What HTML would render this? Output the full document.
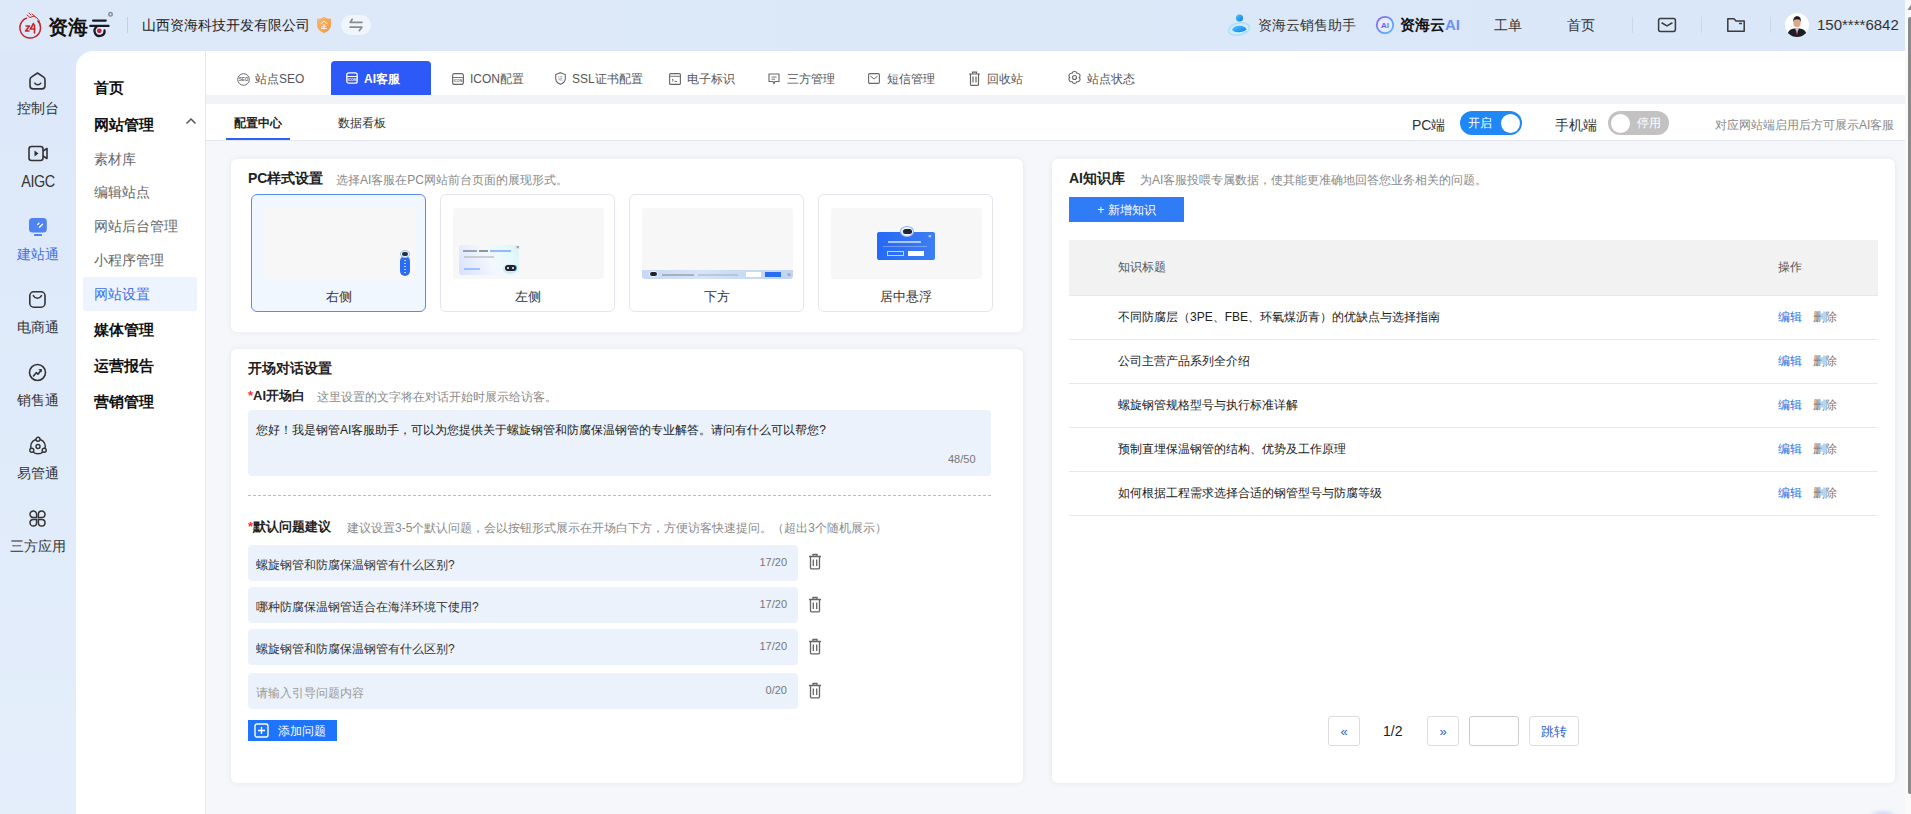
<!DOCTYPE html>
<html><head><meta charset="utf-8">
<style>
*{box-sizing:border-box;margin:0;padding:0}
html,body{width:1911px;height:814px;overflow:hidden}
body{font-family:"Liberation Sans",sans-serif;font-size:14px;color:#333;background:#f6f7fa;position:relative}
.a{position:absolute;white-space:nowrap}
#hdr{left:0;top:0;width:1905px;height:51px;background:linear-gradient(90deg,#dde9f9,#dbe8f8 60%,#d9e7f8)}
#side{left:0;top:51px;width:206px;height:763px;background:linear-gradient(180deg,#dce8f9,#e4eefb)}
#menu{left:76px;top:51px;width:129px;height:763px;background:#fff;border-top-left-radius:17px}
#vdiv{left:205px;top:51px;width:1px;height:763px;background:#e3e8f0}
.sl{width:76px;text-align:center;font-size:14px;color:#333;left:0}
.mi{left:94px;font-size:15px;font-weight:bold;color:#111}
.ms{left:94px;font-size:14px;color:#666}
#tabs{left:206px;top:51px;width:1699px;height:44px;background:#fff}
#strip{left:206px;top:95px;width:1699px;height:9px;background:#f1f3f7}
#sub{left:206px;top:104px;width:1699px;height:37px;background:#fff;border-bottom:1px solid #e4e7ed}
.tab{top:71px;font-size:12px;color:#555;height:16px;line-height:16px}
.tab svg{position:absolute;left:0;top:1px}
.card{background:#fff;border-radius:6px;box-shadow:0 0 6px rgba(20,30,60,.07)}
.gray{color:#8a8a8a;font-size:12px}
.opt{top:194px;width:175px;height:118px;border:1px solid #e3e6ee;border-radius:6px;background:#fff}
.opt .pv{position:absolute;left:12px;top:13px;width:151px;height:71px;background:#f7f7f7;border-radius:3px;overflow:hidden}
.opt .lb{position:absolute;left:0;width:100%;top:93px;text-align:center;font-size:13px;color:#333}
.inp{left:248px;width:550px;height:36px;background:#ebf2fb;border-radius:4px}
.inp .t{position:absolute;left:8px;top:12px;font-size:12px;color:#333}
.inp .c{position:absolute;right:11px;top:11px;font-size:11px;color:#777}
.trash{left:808px}
.row{left:1069px;width:809px;height:44px;border-bottom:1px solid #e8e8e8}
.row .t{position:absolute;left:49px;top:13px;font-size:12px;color:#222}
.row .e{position:absolute;left:709px;top:13px;font-size:12px;color:#2a6fe0}
.row .d{position:absolute;left:744px;top:13px;font-size:12px;color:#777}
.pg{top:716px;height:30px;border:1px solid #ddd;border-radius:3px;background:#fff;text-align:center;line-height:29px;font-size:13px;color:#2a5fd0}
</style></head><body>

<!-- HEADER -->
<div id="hdr" class="a"></div>
<svg class="a" style="left:18px;top:11px" width="26" height="28" viewBox="0 0 26 28"><path d="M19.5 9.5 A10.3 10.3 0 1 1 9 7" fill="none" stroke="#c0262b" stroke-width="1.5"/><path d="M9 4 L12 6.5 L16 5 L19 7 L21 9.5 L22 13 M14 3 L17 5.5 M11 2 L13 4" fill="none" stroke="#c0262b" stroke-width="1" stroke-linecap="round"/><path d="M7.5 15 H11.5 L7.5 20 H11.5" fill="none" stroke="#c0262b" stroke-width="1.6" stroke-linejoin="round"/><path d="M15.5 12.5 L12.5 18 H17 M16.5 14 V22" fill="none" stroke="#c0262b" stroke-width="1.6" stroke-linecap="round"/></svg>
<div class="a" style="left:48px;top:14px;font-size:20px;font-weight:bold;color:#111">资海</div>
<svg class="a" style="left:88px;top:16px" width="22" height="24" viewBox="0 0 22 24"><path d="M5 4.6 H17.8" stroke="#151a28" stroke-width="2.1" stroke-linecap="round"/><path d="M2.2 9.9 H20.6" stroke="#151a28" stroke-width="2.1" stroke-linecap="round"/><path d="M8.6 10.9 A5 5 0 1 0 16.5 14.3" fill="none" stroke="#151a28" stroke-width="2.3" stroke-linecap="round"/><circle cx="11.3" cy="14.8" r="2.4" fill="#c8232b"/></svg>
<svg class="a" style="left:107px;top:11px" width="7" height="7" viewBox="0 0 7 7"><circle cx="3.5" cy="3.3" r="2.5" fill="#8a8f99"/><circle cx="3.5" cy="3.3" r="1" fill="#dfe8f5"/></svg>
<div class="a" style="left:127px;top:17px;width:1px;height:16px;background:#c9cfd9"></div>
<div class="a" style="left:142px;top:17px;font-size:14px;color:#222">山西资海科技开发有限公司</div>
<svg class="a" style="left:316px;top:16px" width="16" height="18" viewBox="0 0 16 18"><defs><linearGradient id="og" x1="0" y1="0" x2="1" y2="1"><stop offset="0" stop-color="#f8b978"/><stop offset="1" stop-color="#f0963a"/></linearGradient></defs><path d="M8 1 C10 2.3 12.5 2.8 15 2.8 V9 C15 13 11.5 15.8 8 17 C4.5 15.8 1 13 1 9 V2.8 C3.5 2.8 6 2.3 8 1 Z" fill="url(#og)"/><path d="M4.5 8 L8 5.2 L11.5 8" fill="none" stroke="#fff" stroke-width="1" opacity=".9"/><path d="M5 12.6 H11 M8 8 V12.6 M8 10.2 H10.3 M6 10 V12.6" fill="none" stroke="#fff" stroke-width="1" opacity=".85"/></svg>
<div class="a" style="left:341px;top:15px;width:30px;height:20px;border-radius:10px;background:#eff5fd"></div>
<svg class="a" style="left:348px;top:17px" width="16" height="16" viewBox="0 0 16 16"><path d="M4.2 2.3 L2.2 5.4 H13.9" fill="none" stroke="#8c8c8c" stroke-width="1.7" stroke-linecap="round" stroke-linejoin="round"/><path d="M2.2 10.2 H13.9 L11.4 13.6" fill="none" stroke="#8c8c8c" stroke-width="1.7" stroke-linecap="round" stroke-linejoin="round"/></svg>

<svg class="a" style="left:1227px;top:13px" width="26" height="26" viewBox="0 0 26 26"><defs><linearGradient id="sg" x1="0" y1="0" x2="1" y2="1"><stop offset="0" stop-color="#3fd0ff"/><stop offset="1" stop-color="#1f6fe8"/></linearGradient></defs><ellipse cx="12" cy="16" rx="10.5" ry="6" transform="rotate(-12 12 16)" fill="none" stroke="#9fe0fb" stroke-width="1.6" opacity=".85"/><circle cx="12.5" cy="5" r="3.6" fill="url(#sg)"/><path d="M5 18 C5.5 11 19.5 11 20 18 C16 20.5 9 20.5 5 18Z" fill="url(#sg)"/><path d="M3.5 17 C8 21 17 21 21.5 15.5" fill="none" stroke="#c9f1ff" stroke-width="1.2"/></svg>
<div class="a" style="left:1258px;top:17px;font-size:14px;color:#333">资海云销售助手</div>
<svg class="a" style="left:1374px;top:14px" width="22" height="22" viewBox="0 0 22 22"><defs><linearGradient id="ag" x1="0" y1="0" x2="1" y2="1"><stop offset="0" stop-color="#8a5cf6"/><stop offset="1" stop-color="#4fc3f7"/></linearGradient><linearGradient id="at" x1="0" y1="0" x2="1" y2="0"><stop offset="0" stop-color="#6a4ff0"/><stop offset="1" stop-color="#4a8cf5"/></linearGradient></defs><circle cx="11" cy="11" r="9.6" fill="#c9d3fb" opacity=".6"/><circle cx="11" cy="11" r="8.2" fill="#e6ebff" stroke="url(#ag)" stroke-width="1.8"/><text x="11" y="14" font-size="8" font-weight="bold" fill="url(#at)" text-anchor="middle" font-family="Liberation Sans">AI</text></svg>
<div class="a" style="left:1400px;top:16px;font-size:15px;font-weight:bold;color:#111">资海云<span style="color:#6b8ef8">AI</span></div>
<div class="a" style="left:1494px;top:17px;font-size:14px;color:#333">工单</div>
<div class="a" style="left:1567px;top:17px;font-size:14px;color:#333">首页</div>
<div class="a" style="left:1632px;top:17px;width:1px;height:16px;background:#cdd6e4"></div>
<svg class="a" style="left:1657px;top:17px" width="20" height="16" viewBox="0 0 20 16"><rect x="1.6" y="1.6" width="16.8" height="12.8" rx="1.8" fill="none" stroke="#3a3a3a" stroke-width="1.5"/><path d="M5 6 L10 8.8 L15 6" fill="none" stroke="#3a3a3a" stroke-width="1.5" stroke-linecap="round" stroke-linejoin="round"/></svg>
<div class="a" style="left:1701px;top:17px;width:1px;height:16px;background:#cdd6e4"></div>
<svg class="a" style="left:1726px;top:17px" width="20" height="16" viewBox="0 0 20 16"><path d="M1.8 1.8 H8 L10 4 H18.2 V14.2 H1.8 Z" fill="none" stroke="#3a3a3a" stroke-width="1.5" stroke-linejoin="round"/><path d="M13 6.5 H16" stroke="#3a3a3a" stroke-width="1.5"/></svg>
<div class="a" style="left:1770px;top:17px;width:1px;height:16px;background:#cdd6e4"></div>
<svg class="a" style="left:1785px;top:13px" width="24" height="24" viewBox="0 0 24 24"><defs><clipPath id="av"><circle cx="12" cy="12" r="12"/></clipPath></defs><circle cx="12" cy="12" r="12" fill="#fff"/><g clip-path="url(#av)"><path d="M2 25 C2 17 6 15.5 12 15.5 C18 15.5 22 17 22 25 Z" fill="#1b1d24"/><path d="M10.3 15.5 L12 21 L13.7 15.5 Z" fill="#f2f2f2"/><path d="M11.6 16.5 L12.4 16.5 L12.6 22 L11.4 22 Z" fill="#b0212a"/><ellipse cx="12" cy="10" rx="3.6" ry="4.4" fill="#d9a98a"/><path d="M8.3 9 C8 4.5 10 3.2 12.2 3.2 C14.5 3.2 16.2 4.6 15.8 9 C15.2 7 14.5 6.3 12 6.3 C9.5 6.3 8.9 7 8.3 9Z" fill="#1e1a18"/></g></svg>
<div class="a" style="left:1817px;top:16px;font-size:15px;color:#333;letter-spacing:0px">150****6842</div>

<!-- SIDEBAR -->
<div id="side" class="a"></div>
<div id="menu" class="a"></div>
<div id="vdiv" class="a"></div>

<svg class="a" style="left:28px;top:71px" width="19" height="20" viewBox="0 0 19 20"><path d="M9.5 2 L15.3 5.9 Q17 7 17 9 V14.7 Q17 17.9 13.8 17.9 H5.2 Q2 17.9 2 14.7 V9 Q2 7 3.7 5.9 Z" fill="none" stroke="#333" stroke-width="1.6" stroke-linejoin="round"/><path d="M6.8 12.2 C8.2 14.3 11.4 14.3 12.8 12.2" fill="none" stroke="#333" stroke-width="1.5" stroke-linecap="round"/></svg>
<div class="a sl" style="top:100px">控制台</div>
<svg class="a" style="left:28px;top:145px" width="20" height="17" viewBox="0 0 20 17"><rect x="1" y="1.5" width="14" height="14" rx="2.5" fill="none" stroke="#333" stroke-width="1.6"/><path d="M15 6 L19 3.5 V13.5 L15 11" fill="none" stroke="#333" stroke-width="1.6" stroke-linejoin="round"/><path d="M6.5 5.5 L10.5 8.5 L6.5 11.5 Z" fill="#333"/></svg>
<div class="a sl" style="top:173px;font-size:16px;letter-spacing:-0.5px;transform:scaleX(0.9)">AIGC</div>
<svg class="a" style="left:28px;top:217px" width="20" height="20" viewBox="0 0 20 20"><rect x="1" y="1" width="17.8" height="14.6" rx="3.5" fill="#5082f4"/><rect x="6" y="17" width="8" height="2" rx="0.5" fill="#5082f4"/><path d="M9.6 7.6 L11 6.2 M11.5 10.2 L14.5 7.2" stroke="#fff" stroke-width="1.3" stroke-linecap="round"/></svg>
<div class="a sl" style="top:246px;color:#3f6fe8">建站通</div>
<svg class="a" style="left:28px;top:290px" width="19" height="19" viewBox="0 0 19 19"><rect x="1.8" y="1.8" width="15.2" height="15.4" rx="4" fill="none" stroke="#333" stroke-width="1.6"/><path d="M5.3 5.6 C7.2 9 11.6 9 13.5 5.6" fill="none" stroke="#333" stroke-width="1.5" stroke-linecap="round"/></svg>
<div class="a sl" style="top:319px">电商通</div>
<svg class="a" style="left:28px;top:363px" width="19" height="19" viewBox="0 0 19 19"><circle cx="9.5" cy="9.5" r="8" fill="none" stroke="#333" stroke-width="1.6"/><path d="M5.5 13 L8.3 9.7 L10 11.2 L13 7.2" fill="none" stroke="#333" stroke-width="1.6" stroke-linejoin="round" stroke-linecap="round"/><path d="M10.3 6.3 L13.8 6 L13.6 9.5 Z" fill="#333"/></svg>
<div class="a sl" style="top:392px">销售通</div>
<svg class="a" style="left:28px;top:436px" width="20" height="20" viewBox="0 0 20 20"><circle cx="10" cy="10.5" r="7.3" fill="none" stroke="#333" stroke-width="1.5"/><circle cx="10" cy="10.5" r="2" fill="none" stroke="#333" stroke-width="1.4"/><circle cx="10" cy="3.3" r="2" fill="#dfeafa" stroke="#333" stroke-width="1.4"/><circle cx="3.8" cy="14.3" r="2" fill="#dfeafa" stroke="#333" stroke-width="1.4"/><circle cx="16.2" cy="14.3" r="2" fill="#dfeafa" stroke="#333" stroke-width="1.4"/></svg>
<div class="a sl" style="top:465px">易管通</div>
<svg class="a" style="left:29px;top:510px" width="17" height="17" viewBox="0 0 17 17"><g fill="none" stroke="#333" stroke-width="1.5" stroke-linejoin="miter"><path d="M7.6 7.6 H4.3 A3.3 3.3 0 1 1 7.6 4.3 Z"/><path d="M9.4 7.6 V4.3 A3.3 3.3 0 1 1 12.7 7.6 Z"/><path d="M9.4 9.4 H12.7 A3.3 3.3 0 1 1 9.4 12.7 Z"/><path d="M7.6 9.4 V12.7 A3.3 3.3 0 1 1 4.3 9.4 Z"/></g></svg>
<div class="a sl" style="top:538px">三方应用</div>

<!-- MENU -->
<div class="a mi" style="top:79px">首页</div>
<div class="a mi" style="top:116px">网站管理</div>
<svg class="a" style="left:185px;top:117px" width="12" height="8" viewBox="0 0 12 8"><path d="M1.5 6.5 L6 2 L10.5 6.5" fill="none" stroke="#555" stroke-width="1.5"/></svg>
<div class="a ms" style="top:151px">素材库</div>
<div class="a ms" style="top:184px">编辑站点</div>
<div class="a ms" style="top:218px">网站后台管理</div>
<div class="a ms" style="top:252px">小程序管理</div>
<div class="a" style="left:83px;top:277px;width:114px;height:34px;background:#eef4fd;border-radius:2px"></div>
<div class="a ms" style="top:286px;color:#3f6fe8">网站设置</div>
<div class="a mi" style="top:321px">媒体管理</div>
<div class="a mi" style="top:357px">运营报告</div>
<div class="a mi" style="top:393px">营销管理</div>

<!-- TABS -->
<div id="tabs" class="a"></div>
<div id="strip" class="a"></div>
<div class="a" style="left:331px;top:61px;width:100px;height:34px;background:#2c59f8;border-radius:4px 4px 0 0"></div>

<svg class="a" style="left:237px;top:73px" width="13" height="13" viewBox="0 0 13 13"><circle cx="6.5" cy="6.5" r="5.8" fill="none" stroke="#666" stroke-width="1"/><text x="6.5" y="8.3" font-size="4.6" fill="#666" text-anchor="middle" font-family="Liberation Sans" font-weight="bold">SEO</text></svg>
<div class="a tab" style="left:255px">站点SEO</div>
<svg class="a" style="left:346px;top:72px" width="12" height="12" viewBox="0 0 12 12"><rect x="0.8" y="0.8" width="10.4" height="10.4" rx="2" fill="none" stroke="#fff" stroke-width="1.3"/><path d="M0.8 4.5 H11.2" stroke="#fff" stroke-width="1"/><text x="6" y="8.8" font-size="3.6" fill="#fff" text-anchor="middle" font-family="Liberation Sans" font-weight="bold">ICON</text></svg>
<div class="a tab" style="left:364px;color:#fff;font-weight:600">AI客服</div>
<svg class="a" style="left:452px;top:73px" width="12" height="12" viewBox="0 0 12 12"><rect x="0.6" y="0.6" width="10.8" height="10.8" rx="2" fill="none" stroke="#666" stroke-width="1.1"/><path d="M0.8 4.5 H11.2" stroke="#666" stroke-width="0.9"/><text x="6" y="8.8" font-size="3.6" fill="#666" text-anchor="middle" font-family="Liberation Sans" font-weight="bold">ICON</text></svg>
<div class="a tab" style="left:470px">ICON配置</div>
<svg class="a" style="left:555px;top:72px" width="11" height="13" viewBox="0 0 11 13"><path d="M5.5 0.7 L10.3 2.6 V6.5 C10.3 9.5 8 11.3 5.5 12.3 C3 11.3 0.7 9.5 0.7 6.5 V2.6 Z" fill="none" stroke="#666" stroke-width="1.1"/><text x="5.5" y="8" font-size="4.5" fill="#666" text-anchor="middle" font-family="Liberation Sans">证</text></svg>
<div class="a tab" style="left:572px">SSL证书配置</div>
<svg class="a" style="left:669px;top:73px" width="12" height="12" viewBox="0 0 12 12"><rect x="0.6" y="0.6" width="10.8" height="10.8" rx="1" fill="none" stroke="#666" stroke-width="1.1"/><path d="M0.8 3.3 H11.2 M3 6 L4.5 7.2 L3 8.4 M5.5 8.5 H8" stroke="#666" stroke-width="0.9" fill="none"/></svg>
<div class="a tab" style="left:687px">电子标识</div>
<svg class="a" style="left:768px;top:73px" width="12" height="12" viewBox="0 0 12 12"><path d="M1 1 H11 V8.5 H7 L6 10.8 L5 8.5 H1 Z" fill="none" stroke="#666" stroke-width="1.1" stroke-linejoin="round"/><path d="M3.5 4 H8.5 M3.5 6.2 H7" stroke="#666" stroke-width="0.9"/></svg>
<div class="a tab" style="left:787px">三方管理</div>
<svg class="a" style="left:868px;top:73px" width="12" height="11" viewBox="0 0 12 11"><rect x="0.6" y="0.6" width="10.8" height="9.8" rx="1.2" fill="none" stroke="#666" stroke-width="1.1"/><path d="M2.5 3.2 L6 6 L9.5 3.2" stroke="#666" stroke-width="1" fill="none"/></svg>
<div class="a tab" style="left:887px">短信管理</div>
<svg class="a" style="left:968px;top:71px" width="13" height="15" viewBox="0 0 13 15"><path d="M1 3 H12 M4.5 3 V1.2 H8.5 V3 M2.5 3 V13.5 C2.5 14 2.8 14.3 3.3 14.3 H9.7 C10.2 14.3 10.5 14 10.5 13.5 V3 M5 5.5 V11.5 M8 5.5 V11.5" fill="none" stroke="#666" stroke-width="1.2"/></svg>
<div class="a tab" style="left:987px">回收站</div>
<svg class="a" style="left:1068px;top:71px" width="13" height="13" viewBox="0 0 13 13"><path d="M8.90 2.34 A2.5 2.5 0 0 1 11.30 6.50 A2.5 2.5 0 0 1 8.90 10.66 A2.5 2.5 0 0 1 4.10 10.66 A2.5 2.5 0 0 1 1.70 6.50 A2.5 2.5 0 0 1 4.10 2.34 A2.5 2.5 0 0 1 8.90 2.34 Z" fill="none" stroke="#666" stroke-width="1.1" stroke-linejoin="round"/><circle cx="6.5" cy="6.5" r="2" fill="none" stroke="#666" stroke-width="1.1"/></svg>
<div class="a tab" style="left:1087px">站点状态</div>


<div id="sub" class="a"></div>
<div class="a" style="left:234px;top:115px;font-size:12px;font-weight:bold;color:#222">配置中心</div>
<div class="a" style="left:226px;top:138px;width:64px;height:2px;background:#2c5ff6"></div>
<div class="a" style="left:338px;top:115px;font-size:12px;color:#333">数据看板</div>

<div class="a" style="left:1412px;top:117px;font-size:14px;color:#333">PC端</div>
<div class="a" style="left:1460px;top:111px;width:62px;height:24px;border-radius:12px;background:#1f87f6"><span style="position:absolute;left:8px;top:3.5px;font-size:12px;color:#fff">开启</span><span style="position:absolute;right:2px;top:2.5px;width:19px;height:19px;border-radius:50%;background:#fff"></span></div>
<div class="a" style="left:1555px;top:117px;font-size:14px;color:#333">手机端</div>
<div class="a" style="left:1608px;top:111px;width:61px;height:24px;border-radius:12px;background:#c2c2c2"><span style="position:absolute;left:2.5px;top:2.5px;width:19px;height:19px;border-radius:50%;background:#fff"></span><span style="position:absolute;right:8px;top:3.5px;font-size:12px;color:#fff">停用</span></div>
<div class="a" style="left:1715px;top:117px;font-size:12px;color:#888">对应网站端启用后方可展示AI客服</div>

<!-- LEFT CARD 1 -->
<div class="a card" style="left:231px;top:159px;width:792px;height:173px"></div>
<div class="a" style="left:248px;top:170px;font-size:14px;font-weight:bold;color:#222">PC样式设置</div>
<div class="a gray" style="left:336px;top:172px">选择AI客服在PC网站前台页面的展现形式。</div>
<div class="a opt" style="left:251px;border-color:#5b8af5;background:#f0f7ff"><div class="pv"><div style="position:absolute;left:136px;top:41.5px;width:10px;height:27px;">
<div style="position:absolute;left:0;top:6px;width:10px;height:20px;border-radius:5px;background:#2a6cf5"></div>
<div style="position:absolute;left:4px;top:10px;width:2px;height:13px;background:repeating-linear-gradient(180deg,#fff 0 1.5px,transparent 1.5px 3px);opacity:.7"></div>
<div style="position:absolute;left:0;top:0;width:10px;height:8px;border-radius:50%;background:#e9f3ff;border:1px solid #9cc4f7"></div>
<div style="position:absolute;left:2px;top:2.5px;width:6px;height:3.5px;border-radius:2px;background:#2a2f3a"></div>
</div></div><div class="lb">右侧</div></div>
<div class="a opt" style="left:440px"><div class="pv"><div style="position:absolute;left:6px;top:37px;width:60px;height:30px;border-radius:3px;background:linear-gradient(60deg,#d6e1fb 0%,#f4f7ff 50%,#e8f9fb 75%,#d8f3f6 100%)">
<div style="position:absolute;left:4px;top:5px;width:14px;height:2px;background:#555;opacity:.5"></div>
<div style="position:absolute;left:20px;top:5px;width:9px;height:2px;background:#444;opacity:.55"></div>
<div style="position:absolute;left:31px;top:5px;width:21px;height:2px;background:#6fa0f7;opacity:.7"></div>
<div style="position:absolute;left:5px;top:11px;width:30px;height:1.5px;background:#aaa;opacity:.5"></div>
<div style="position:absolute;left:5px;top:23px;width:16px;height:2px;background:#7fb0f7;opacity:.7"></div>
<div style="position:absolute;left:44px;top:19px;width:14px;height:10px;border-radius:50%;background:rgba(200,225,235,.7)"></div>
<div style="position:absolute;left:46px;top:20px;width:11px;height:6px;border-radius:3px;background:#1f2430;box-shadow:1px 0 0 #3aa0f0"></div>
<div style="position:absolute;left:48px;top:22px;width:2px;height:2px;border-radius:50%;background:#fff"></div>
<div style="position:absolute;left:53px;top:22px;width:2px;height:2px;border-radius:50%;background:#fff"></div>
<div style="position:absolute;left:57px;top:-1px;font-size:6px;color:#666;line-height:6px">×</div>
</div></div><div class="lb">左侧</div></div>
<div class="a opt" style="left:629px"><div class="pv"><div style="position:absolute;left:0;top:62px;width:151px;height:10px;border-radius:0 0 3px 3px;background:linear-gradient(90deg,#c6d8f4,#d5e4f7 40%,#c9def5 60%,#c2d4f2)">
<div style="position:absolute;left:7px;top:1px;width:9px;height:6px;border-radius:50%;background:#f0f4fa"></div>
<div style="position:absolute;left:8px;top:2px;width:7px;height:3.5px;border-radius:2px;background:#1f2430"></div>
<div style="position:absolute;left:20px;top:4px;width:32px;height:2px;background:#777;opacity:.45"></div>
<div style="position:absolute;left:56px;top:4px;width:40px;height:1.5px;background:#999;opacity:.35"></div>
<div style="position:absolute;left:104px;top:2px;width:15px;height:5px;background:#fff"></div>
<div style="position:absolute;left:123px;top:2px;width:16px;height:5px;background:#2a6cf5"></div>
<div style="position:absolute;left:145px;top:0px;font-size:7px;color:#888;line-height:9px">×</div>
</div></div><div class="lb">下方</div></div>
<div class="a opt" style="left:818px"><div class="pv"><div style="position:absolute;left:46px;top:24px;width:58px;height:28px;border-radius:2px;background:linear-gradient(90deg,#2469f7,#3e7ef2)">
<div style="position:absolute;left:11px;top:9px;width:33px;height:2px;background:#fff;opacity:.6"></div>
<div style="position:absolute;left:6px;top:13.5px;width:44px;height:1.2px;background:#fff;opacity:.3"></div>
<div style="position:absolute;left:10px;top:19px;width:17px;height:5px;border:1px solid rgba(255,255,255,.7)"></div>
<div style="position:absolute;left:31px;top:19px;width:16px;height:5px;background:#fff"></div>
<div style="position:absolute;left:51px;top:1px;font-size:6px;color:#fff;line-height:6px">×</div>
</div>
<div style="position:absolute;left:69px;top:18px;width:14px;height:11px;border-radius:50%;background:#eef3fb;border:1px solid #8ab0f5"></div>
<div style="position:absolute;left:71.5px;top:21px;width:9px;height:5px;border-radius:2.5px;background:#1f2430"></div>
</div><div class="lb">居中悬浮</div></div>

<!-- LEFT CARD 2 -->
<div class="a card" style="left:231px;top:349px;width:792px;height:434px"></div>
<div class="a" style="left:248px;top:360px;font-size:14px;font-weight:bold;color:#222">开场对话设置</div>
<div class="a" style="left:248px;top:387px;font-size:13px;font-weight:bold;color:#222"><span style="color:#e33">*</span>AI开场白</div>
<div class="a gray" style="left:317px;top:389px">这里设置的文字将在对话开始时展示给访客。</div>
<div class="a" style="left:248px;top:410px;width:743px;height:66px;background:#ebf2fb;border-radius:4px"></div>
<div class="a" style="left:256px;top:422px;font-size:12px;color:#222">您好！我是钢管AI客服助手，可以为您提供关于螺旋钢管和防腐保温钢管的专业解答。请问有什么可以帮您?</div>
<div class="a" style="left:948px;top:453px;font-size:11px;color:#777">48/50</div>
<div class="a" style="left:248px;top:495px;width:743px;height:0;border-top:1px dashed #bbb"></div>
<div class="a" style="left:248px;top:518px;font-size:13px;font-weight:bold;color:#222"><span style="color:#e33">*</span>默认问题建议</div>
<div class="a gray" style="left:347px;top:520px">建议设置3-5个默认问题，会以按钮形式展示在开场白下方，方便访客快速提问。（超出3个随机展示）</div>

<div class="a inp" style="top:545px"><span class="t">螺旋钢管和防腐保温钢管有什么区别?</span><span class="c">17/20</span></div>
<div class="a inp" style="top:587px"><span class="t">哪种防腐保温钢管适合在海洋环境下使用?</span><span class="c">17/20</span></div>
<div class="a inp" style="top:629px"><span class="t">螺旋钢管和防腐保温钢管有什么区别?</span><span class="c">17/20</span></div>
<div class="a inp" style="top:673px"><span class="t" style="color:#999">请输入引导问题内容</span><span class="c">0/20</span></div>
<svg class="a" style="left:808px;top:553px" width="14" height="17" viewBox="0 0 14 17"><path d="M1 3.5 H13 M5 3.5 V1.5 H9 V3.5 M2.5 3.5 V15 C2.5 15.5 2.9 15.8 3.4 15.8 H10.6 C11.1 15.8 11.5 15.5 11.5 15 V3.5 M5.3 6.5 V13 M8.7 6.5 V13" fill="none" stroke="#666" stroke-width="1.3"/></svg>
<svg class="a" style="left:808px;top:596px" width="14" height="17" viewBox="0 0 14 17"><path d="M1 3.5 H13 M5 3.5 V1.5 H9 V3.5 M2.5 3.5 V15 C2.5 15.5 2.9 15.8 3.4 15.8 H10.6 C11.1 15.8 11.5 15.5 11.5 15 V3.5 M5.3 6.5 V13 M8.7 6.5 V13" fill="none" stroke="#666" stroke-width="1.3"/></svg>
<svg class="a" style="left:808px;top:638px" width="14" height="17" viewBox="0 0 14 17"><path d="M1 3.5 H13 M5 3.5 V1.5 H9 V3.5 M2.5 3.5 V15 C2.5 15.5 2.9 15.8 3.4 15.8 H10.6 C11.1 15.8 11.5 15.5 11.5 15 V3.5 M5.3 6.5 V13 M8.7 6.5 V13" fill="none" stroke="#666" stroke-width="1.3"/></svg>
<svg class="a" style="left:808px;top:682px" width="14" height="17" viewBox="0 0 14 17"><path d="M1 3.5 H13 M5 3.5 V1.5 H9 V3.5 M2.5 3.5 V15 C2.5 15.5 2.9 15.8 3.4 15.8 H10.6 C11.1 15.8 11.5 15.5 11.5 15 V3.5 M5.3 6.5 V13 M8.7 6.5 V13" fill="none" stroke="#666" stroke-width="1.3"/></svg>

<div class="a" style="left:248px;top:720px;width:89px;height:21px;background:#1f74fd"></div>
<svg class="a" style="left:254px;top:723px" width="15" height="15" viewBox="0 0 15 15"><rect x="1" y="1" width="13" height="13" rx="2" fill="none" stroke="#fff" stroke-width="1.4"/><path d="M7.5 4 V11 M4 7.5 H11" stroke="#fff" stroke-width="1.4"/></svg>
<div class="a" style="left:278px;top:723px;font-size:12px;color:#fff">添加问题</div>

<!-- RIGHT CARD -->
<div class="a card" style="left:1052px;top:159px;width:843px;height:624px"></div>
<div class="a" style="left:1069px;top:170px;font-size:14px;font-weight:bold;color:#222">AI知识库</div>
<div class="a gray" style="left:1140px;top:172px">为AI客服投喂专属数据，使其能更准确地回答您业务相关的问题。</div>
<div class="a" style="left:1069px;top:197px;width:115px;height:25px;background:#2f7cf6;color:#fff;font-size:12px;text-align:center;line-height:27px">+ 新增知识</div>
<div class="a" style="left:1069px;top:240px;width:809px;height:56px;background:#f2f2f2;border-bottom:1px solid #e8e8e8"></div>
<div class="a" style="left:1118px;top:259px;font-size:12px;color:#555">知识标题</div>
<div class="a" style="left:1778px;top:259px;font-size:12px;color:#555">操作</div>
<div class="a row" style="top:296px"><span class="t">不同防腐层（3PE、FBE、环氧煤沥青）的优缺点与选择指南</span><span class="e">编辑</span><span class="d">删除</span></div>
<div class="a row" style="top:340px"><span class="t">公司主营产品系列全介绍</span><span class="e">编辑</span><span class="d">删除</span></div>
<div class="a row" style="top:384px"><span class="t">螺旋钢管规格型号与执行标准详解</span><span class="e">编辑</span><span class="d">删除</span></div>
<div class="a row" style="top:428px"><span class="t">预制直埋保温钢管的结构、优势及工作原理</span><span class="e">编辑</span><span class="d">删除</span></div>
<div class="a row" style="top:472px"><span class="t">如何根据工程需求选择合适的钢管型号与防腐等级</span><span class="e">编辑</span><span class="d">删除</span></div>

<div class="a pg" style="left:1328px;width:32px">«</div>
<div class="a" style="left:1383px;top:723px;font-size:14px;color:#222">1/2</div>
<div class="a pg" style="left:1427px;width:32px">»</div>
<div class="a pg" style="left:1469px;width:50px;border-color:#ccc"></div>
<div class="a pg" style="left:1529px;width:50px">跳转</div>

<!-- SCROLLBAR -->
<div class="a" style="left:1845px;top:790px;width:76px;height:24px;background:radial-gradient(ellipse 24px 22px at 38px 38px,rgba(80,120,250,.6),rgba(120,155,250,.35) 60%,rgba(200,215,250,.1) 85%,rgba(255,255,255,0) 100%)"></div>
<div class="a" style="left:1905px;top:0;width:6px;height:814px;background:#fafafa"></div>
<svg class="a" style="left:1907px;top:4px" width="4" height="7" viewBox="0 0 4 7"><path d="M4 0.5 L0.5 6 H4 Z" fill="#8a8a8a"/></svg>
<div class="a" style="left:1908px;top:17px;width:3px;height:777px;background:#8a8a8a;border-radius:2px 0 0 2px"></div>
</body></html>
